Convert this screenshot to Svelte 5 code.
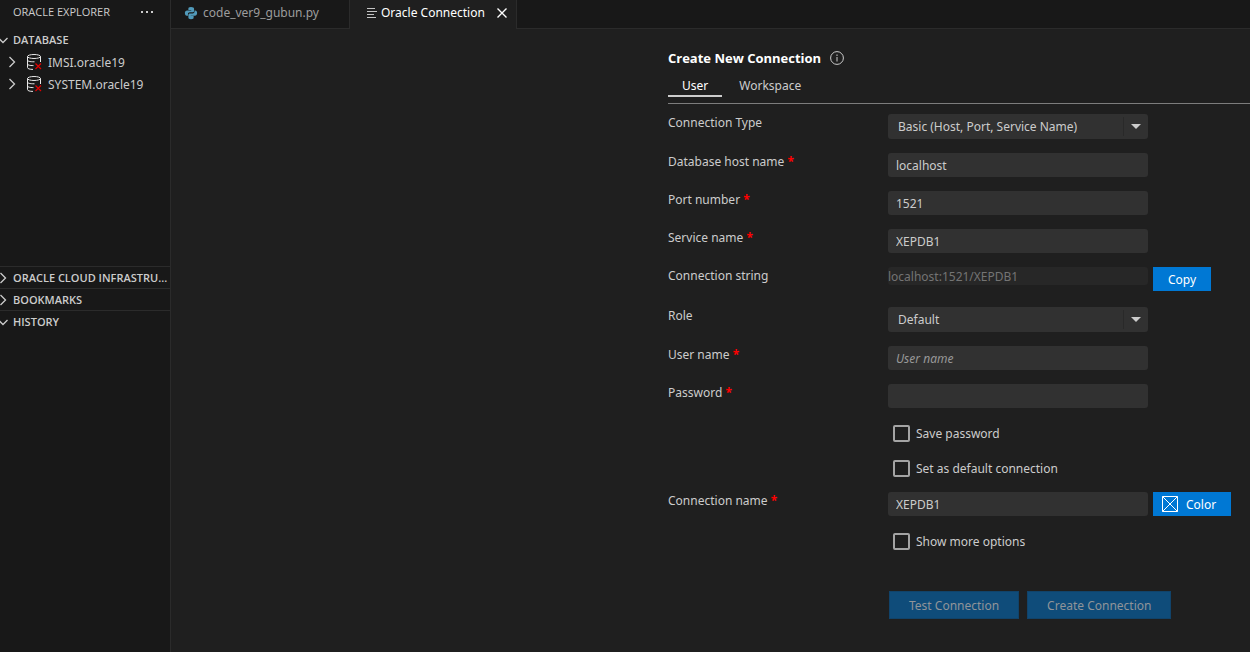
<script lang="ts">
  // Oracle Explorer side bar plus the "Create New Connection" editor.
  let connections = ['IMSI.oracle19', 'SYSTEM.oracle19']
  let connectionTypes = ['Basic (Host, Port, Service Name)', 'TNS Alias', 'Advanced']
  let roles = ['Default', 'SYSDBA', 'SYSOPER']

  let connectionType = $state(connectionTypes[0])
  let host = $state('localhost')
  let port = $state('1521')
  let service = $state('XEPDB1')
  let role = $state(roles[0])
  let user = $state('')
  let password = $state('')
  let savePassword = $state(false)
  let isDefault = $state(false)
  let connectionName = $state('XEPDB1')
  let showMore = $state(false)
  let scope = $state('User')

  const connectionString = $derived(`${host}:${port}/${service}`)
  const canSubmit = $derived(user !== '' && password !== '')
</script>

{#snippet chevron(open: boolean)}
  <svg class="chevron" viewBox="0 0 16 16" aria-hidden="true">
    <path d={open ? 'M3.5 6 8 10.500l4.500-4.500' : 'M5.500 3 10.500 8l-5 5'} />
  </svg>
{/snippet}

{#snippet label(id: string, text: string, required: boolean)}
  <label for={id}>{text}{#if required}&nbsp;<span class="required">*</span>{/if}</label>
{/snippet}

{#snippet arrow()}
  <svg class="arrow" viewBox="0 0 25 19" aria-hidden="true">
    <path class="divider" d="M.5 0v19" />
    <path class="tip" d="M8 7h10l-5 5z" />
  </svg>
{/snippet}

<div class="workbench">
  <aside>
    <header class="view-title">
      <h2>ORACLE EXPLORER</h2>
      <button class="icon-button" aria-label="More actions">
        <svg viewBox="0 0 16 16"><path d="M2 7h2v2H2zM7 7h2v2H7zM12 7h2v2h-2z" /></svg>
      </button>
    </header>

    <section class="database">
      <button class="pane-header">{@render chevron(true)}<span>DATABASE</span></button>
      <ul>
        {#each connections as name (name)}
          <li>
            {@render chevron(false)}
            <svg class="db" viewBox="0 0 16 16" aria-hidden="true">
              <ellipse cx="8" cy="2.500" rx="6.500" ry="2" />
              <path d="M1.500 2.500v11c0 1.200 2 1.900 5.500 1.900M14.500 2.500V8M1.500 6c0 1.200 2 1.800 7 1.800M1.500 9.800c0 1.200 2 1.800 6 1.800" />
              <path class="off" d="M9.500 9.500l5.500 5.500M15 9.500L9.500 15" />
            </svg>
            <span>{name}</span>
          </li>
        {/each}
      </ul>
    </section>
    <button class="pane-header ruled">{@render chevron(false)}<span>ORACLE CLOUD INFRASTRU...</span></button>
    <button class="pane-header ruled">{@render chevron(false)}<span>BOOKMARKS</span></button>
    <button class="pane-header ruled">{@render chevron(true)}<span>HISTORY</span></button>
  </aside>

  <main>
    <nav class="tabs">
      <button class="tab file">
        <svg class="python" viewBox="0 0 16 16" aria-hidden="true">
          <path d="M8 1C5.500 1 5 2 5 3v1.500h3.300V5H3.500C2 5 1 6.200 1 8s.8 3 2.200 3h1.300V9.300C4.500 8 5.500 7.200 6.700 7.200h3c1 0 1.800-.7 1.800-1.800V3c0-1.200-1-2-3.500-2z" />
          <path d="M8 15c2.500 0 3-1 3-2v-1.500H7.700V11h4.800C14 11 15 9.800 15 8s-.8-3-2.200-3h-.8v1.700c0 1.200-1 2-2 2h-3c-1.200 0-2 .8-2 1.800V13c0 1.200 1 2 3 2z" />
        </svg>
        <span>code_ver9_gubun.py</span>
      </button>
      <div class="tab active">
        <svg class="lines" viewBox="0 0 10 12" aria-hidden="true"><path d="M0 1.500h8M0 4.500h10M0 7.500h7M0 10.500h9" /></svg>
        <span>Oracle Connection</span>
        <button class="icon-button" aria-label="Close">
          <svg class="close" viewBox="0 0 16 16"><path d="M3.500 3.500l9 9M12.500 3.500l-9 9" /></svg>
        </button>
      </div>
      <div class="filler"></div>
    </nav>

    <form onsubmit={(e) => e.preventDefault()}>
      <h1>
        Create New Connection
        <svg class="info" viewBox="0 0 14 14" aria-hidden="true">
          <circle cx="7" cy="7" r="6.400" />
          <path d="M7 6v4.500M7 3.500V5" />
        </svg>
      </h1>
      <div class="scopes">
        {#each ['User', 'Workspace'] as s (s)}
          <button type="button" class:selected={scope === s} onclick={() => (scope = s)}>{s}</button>
        {/each}
      </div>

      <div class="fields">
        <div class="row">
          {@render label('type', 'Connection Type', false)}
          <div class="select">
            <select id="type" bind:value={connectionType}>
              {#each connectionTypes as t (t)}<option>{t}</option>{/each}
            </select>
            {@render arrow()}
          </div>
        </div>
        <div class="row">
          {@render label('host', 'Database host name', true)}
          <input id="host" type="text" bind:value={host} />
        </div>
        <div class="row">
          {@render label('port', 'Port number', true)}
          <input id="port" type="text" bind:value={port} />
        </div>
        <div class="row">
          {@render label('service', 'Service name', true)}
          <input id="service" type="text" bind:value={service} />
        </div>
        <div class="row string-row">
          {@render label('string', 'Connection string', false)}
          <input id="string" class="readonly" type="text" value={connectionString} disabled />
          <button type="button" class="primary">Copy</button>
        </div>
        <div class="row">
          {@render label('role', 'Role', false)}
          <div class="select">
            <select id="role" bind:value={role}>
              {#each roles as r (r)}<option>{r}</option>{/each}
            </select>
            {@render arrow()}
          </div>
        </div>
        <div class="row">
          {@render label('user', 'User name', true)}
          <input id="user" type="text" placeholder="User name" bind:value={user} />
        </div>
        <div class="row">
          {@render label('password', 'Password', true)}
          <input id="password" type="password" bind:value={password} />
        </div>
        <div class="checks">
          <label><input type="checkbox" bind:checked={savePassword} />Save password</label>
          <label><input type="checkbox" bind:checked={isDefault} />Set as default connection</label>
        </div>
        <div class="row">
          {@render label('name', 'Connection name', true)}
          <input id="name" type="text" bind:value={connectionName} />
          <button type="button" class="primary">
            <svg class="swatch" viewBox="0 0 16 16" aria-hidden="true"><path d="M.5.5h15v15H.5zM.5.5l15 15M15.500.5l-15 15" /></svg>
            Color
          </button>
        </div>
        <div class="checks">
          <label><input type="checkbox" bind:checked={showMore} />Show more options</label>
        </div>
      </div>

      <div class="actions">
        <button type="button" disabled={!canSubmit}>Test Connection</button>
        <button type="submit" disabled={!canSubmit}>Create Connection</button>
      </div>
    </form>
  </main>
</div>

<style>
  :global(body) {
    background: #1f1f1f;
  }
  .workbench {
    display: grid;
    grid-template-columns: 171px 1fr;
    min-height: 100vh;
    font: 12px/19px 'Noto Sans', 'Open Sans', sans-serif;
    color: #cccccc;
  }
  button,
  input,
  select {
    font: inherit;
    color: inherit;
    margin: 0;
    border: 0;
    box-sizing: border-box;
  }
  button {
    background: none;
    padding: 0;
    cursor: pointer;
    white-space: nowrap;
  }
  svg {
    flex: none;
    fill: none;
    stroke: currentColor;
  }

  /* side bar */
  aside {
    display: flex;
    flex-direction: column;
    min-width: 0;
    background: #181818;
    border-right: 1px solid #2b2b2b;
  }
  .view-title {
    display: flex;
    align-items: center;
    justify-content: space-between;
    height: 24px;
    padding: 0 15px 0 13px;
    margin-bottom: 5px;
  }
  h2 {
    margin: 0;
    font-family: 'Open Sans', 'Noto Sans', sans-serif;
    font-size: 11px;
    font-weight: 400;
    line-height: 18px;
  }
  .icon-button {
    display: flex;
  }
  .icon-button svg {
    width: 16px;
    height: 16px;
  }
  .view-title svg {
    fill: currentColor;
    stroke: none;
  }
  .database {
    height: 237px;
  }
  .pane-header {
    display: flex;
    align-items: center;
    width: 100%;
    height: 22px;
    font-family: 'Open Sans', 'Noto Sans', sans-serif;
    font-size: 11px;
    font-weight: 600;
    line-height: 18px;
    text-align: left;
  }
  .pane-header .chevron {
    margin-left: -5px;
    margin-right: 2px;
  }
  .ruled {
    border-top: 1px solid #2b2b2b;
  }
  .chevron {
    width: 16px;
    height: 16px;
    stroke-width: 1.3;
  }
  ul {
    list-style: none;
    margin: 0;
    padding: 0;
  }
  li {
    display: flex;
    align-items: center;
    height: 22px;
    padding-left: 4px;
  }
  .db {
    width: 16px;
    height: 16px;
    margin: 0 6px;
    stroke: #e8e8e8;
  }
  .off {
    stroke: #e00000;
    stroke-width: 1.2;
  }

  /* editor tabs */
  main {
    min-width: 0;
    background: #1f1f1f;
  }
  .tabs {
    display: flex;
    height: 29px;
    background: #181818;
  }
  .tab {
    display: flex;
    align-items: center;
    box-sizing: border-box;
    padding-bottom: 3px;
    border-right: 1px solid #2b2b2b;
    white-space: nowrap;
  }
  .file {
    width: 179px;
    padding-left: 13px;
    gap: 5px;
    border-bottom: 1px solid #2b2b2b;
    color: #9d9d9d;
  }
  .active {
    width: 167px;
    padding-left: 17px;
    padding-bottom: 4px;
    gap: 4px;
    background: #1f1f1f;
    color: #ffffff;
  }
  .active .icon-button {
    margin-left: auto;
    margin-right: 6px;
  }
  .filler {
    flex: 1;
    border-bottom: 1px solid #2b2b2b;
  }
  .python {
    width: 14px;
    height: 14px;
    fill: #519aba;
    stroke: none;
  }
  .lines {
    width: 10px;
    height: 12px;
    stroke: #c5c5c5;
  }
  .close {
    stroke-width: 1.4;
  }

  /* connection form */
  form {
    width: 582px;
    margin-left: auto;
    padding-top: 19px;
  }
  h1 {
    display: flex;
    align-items: center;
    gap: 9px;
    height: 20px;
    margin: 0;
    font-family: 'Open Sans', 'Noto Sans', sans-serif;
    font-size: 13px;
    font-weight: 700;
    line-height: 18px;
    color: #ffffff;
  }
  .info {
    width: 14px;
    height: 14px;
    stroke: #cccccc;
  }
  .scopes {
    display: flex;
    gap: 3px;
    padding: 7px 0 6px;
    border-bottom: 1px solid #7d7d7d;
  }
  .scopes button {
    height: 22px;
    padding: 0 14px;
    border-bottom: 2px solid transparent;
  }
  .scopes .selected {
    color: #ffffff;
    border-color: #cccccc;
  }
  .fields {
    display: flex;
    flex-direction: column;
    gap: 14px;
    padding-top: 10px;
  }
  .row {
    display: grid;
    grid-template-columns: 220px 260px auto;
    align-items: start;
    justify-content: start;
  }
  .row label {
    line-height: 18px;
  }
  .string-row {
    min-height: 26px;
  }
  .required {
    color: #ff0000;
    font-weight: 700;
  }
  .row input {
    width: 100%;
    height: 24px;
    padding: 0 8px;
    background: #313131;
    border-radius: 3px;
  }
  .row .readonly {
    height: 18px;
    padding: 0;
    background: #272727;
    color: #747474;
  }
  input::placeholder {
    color: #989898;
    font-style: italic;
    opacity: 1;
  }
  .select {
    display: grid;
  }
  .select > * {
    grid-area: 1 / 1;
  }
  select {
    appearance: none;
    height: 25px;
    padding: 0 30px 0 10px;
    background: #313131;
    border-radius: 3px;
  }
  .arrow {
    width: 25px;
    height: 19px;
    align-self: center;
    justify-self: end;
    pointer-events: none;
  }
  .divider {
    stroke: #292929;
  }
  .tip {
    fill: #cccccc;
    stroke: none;
  }
  .primary {
    display: flex;
    align-items: center;
    gap: 8px;
    height: 24px;
    margin-left: 5px;
    padding: 0 15px;
    background: #0078d4;
    color: #ffffff;
  }
  .swatch {
    width: 16px;
    height: 16px;
    margin-left: -6px;
  }
  .checks {
    display: flex;
    flex-direction: column;
    align-items: start;
    gap: 18px;
    padding: 3px 0 1px 225px;
  }
  .checks label {
    display: flex;
    align-items: center;
    gap: 6px;
    height: 17px;
  }
  .checks input {
    appearance: none;
    width: 17px;
    height: 17px;
    border: 2px solid #a4a4a4;
    border-radius: 2px;
  }
  .checks input:checked {
    background: #0078d4;
  }
  .actions {
    display: flex;
    gap: 8px;
    margin: 40px 0 32px 221px;
  }
  .actions button {
    height: 28px;
    padding: 1px 19px 0;
    background: #0078d4;
    color: #ffffff;
  }
  .actions button:disabled {
    background: #0f4c7a;
    border: 1px solid #11436a;
    color: #8f9499;
    cursor: default;
  }
</style>
